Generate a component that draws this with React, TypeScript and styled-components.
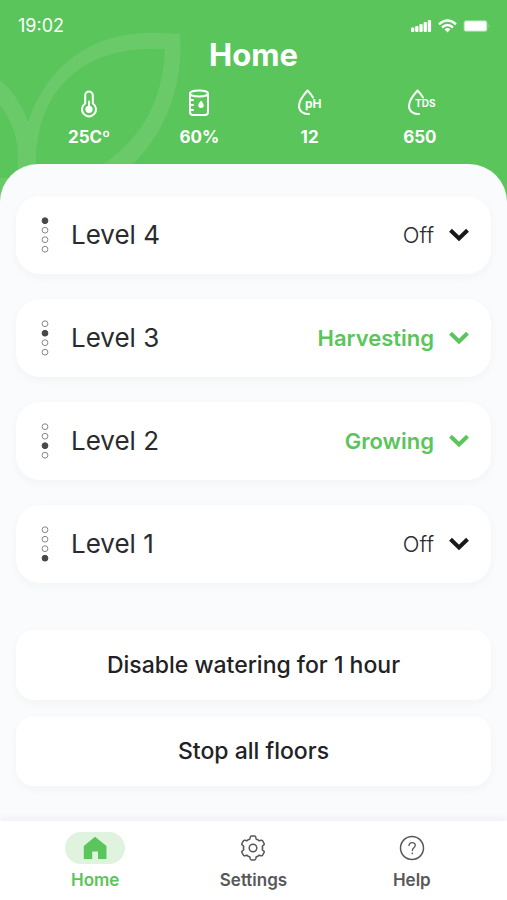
import React, { useState } from "react";
import styled, { createGlobalStyle } from "styled-components";

const green = "#5ac55a";
const ink = "#2b2b2e";
const grey = "#58585a";

const GlobalStyle = createGlobalStyle`
  * { box-sizing: border-box; }
  body { margin: 0; background: #fafbfd; font-family: Inter, "Liberation Sans", sans-serif; color: ${ink}; }
  button { font-family: inherit; color: inherit; border: 0; cursor: pointer; }
`;

const Page = styled.div`
  position: relative;
  display: flex;
  flex-direction: column;
  min-height: 100vh;
  background: ${green};
`;

const Leaf = styled.svg`
  position: absolute;
  top: 0;
  left: 0;
`;

const Header = styled.header`
  position: relative;
  color: #fff;
  padding-bottom: 16px;
`;

const StatusBar = styled.div`
  display: flex;
  align-items: center;
  justify-content: space-between;
  padding: 16px 16px 0 18px;
  height: 36px;
  font-size: 18px;
  line-height: 20px;
`;

const StatusIcons = styled.div`
  display: flex;
  align-items: center;
  gap: 6px;
`;

const Title = styled.h1`
  margin: 0;
  text-align: center;
  font-size: 31px;
  line-height: 38px;
  font-weight: 700;
`;

const Metrics = styled.ul`
  display: grid;
  grid-template-columns: repeat(4, 1fr);
  list-style: none;
  margin: 0;
  padding: 14px 32px 0 34px;
`;

const Metric = styled.li`
  display: flex;
  flex-direction: column;
  align-items: center;
  gap: 8px;
  font-size: 17px;
  line-height: 22px;
  font-weight: 700;
`;

const MetricIcon = styled.svg`
  width: 32px;
  height: 30px;
  fill: none;
  stroke: #fff;
  stroke-width: 2;
  stroke-linecap: round;
  stroke-linejoin: round;

  text {
    fill: #fff;
    stroke: none;
    font-weight: 700;
  }
`;

const Main = styled.main`
  position: relative;
  flex: 1;
  display: flex;
  flex-direction: column;
  gap: 47px;
  padding: 32px 16px;
  background: #fafbfd;
  border-radius: 38px 38px 0 0;
`;

const Stack = styled.div<{ $gap: number }>`
  display: flex;
  flex-direction: column;
  gap: ${(p) => p.$gap}px;
`;

const LevelCard = styled.button`
  display: flex;
  align-items: center;
  height: 78px;
  padding: 0 22px 0 24px;
  background: #fff;
  border-radius: 24px;
  box-shadow: 0 3px 8px rgba(30, 40, 50, 0.04);
`;

const LevelDots = styled.svg`
  width: 10px;
  height: 38px;
  margin-right: 21px;
`;

const LevelName = styled.span`
  flex: 1;
  text-align: left;
  font-size: 26px;
  line-height: 32px;
`;

const LevelStatus = styled.span<{ $active: boolean }>`
  display: flex;
  align-items: center;
  gap: 15px;
  font-size: 22px;
  line-height: 28px;
  font-weight: ${(p) => (p.$active ? 600 : 300)};
  color: ${(p) => (p.$active ? green : ink)};
`;

const Chevron = styled.svg<{ $active: boolean }>`
  width: 20px;
  height: 14px;
  fill: none;
  stroke: ${(p) => (p.$active ? green : "#18181a")};
  stroke-width: 4;
`;

const ActionButton = styled.button`
  height: 70px;
  background: #fff;
  border-radius: 18px;
  box-shadow: 0 3px 8px rgba(30, 40, 50, 0.04);
  font-size: 23px;
  line-height: 28px;
  font-weight: 500;
  color: #222224;
`;

const Nav = styled.nav`
  position: relative;
  display: grid;
  grid-template-columns: repeat(3, 1fr);
  padding: 11px 16px 9px;
  background: #fff;
  box-shadow: 0 -3px 8px rgba(30, 40, 50, 0.05);
`;

const NavLink = styled.a<{ $active: boolean }>`
  display: flex;
  flex-direction: column;
  align-items: center;
  gap: 5px;
  text-decoration: none;
  font-size: 17px;
  line-height: 22px;
  font-weight: 600;
  color: ${(p) => (p.$active ? green : grey)};
`;

const NavPill = styled.span<{ $active: boolean }>`
  display: flex;
  align-items: center;
  justify-content: center;
  width: 60px;
  height: 32px;
  border-radius: 16px;
  background: ${(p) => (p.$active ? "#dff3df" : "transparent")};
`;

const Thermometer = () => (
  <MetricIcon viewBox="0 0 32 30" aria-hidden="true">
    <path d="M12.2 15.500V7.300a3.800 3.800 0 0 1 7.600 0v8.200a7 7 0 1 1-7.600 0Z" />
    <path d="M16 13.500v7" />
    <circle cx="16" cy="21.300" r="3.600" fill="#fff" stroke="none" />
  </MetricIcon>
);

const Tank = () => (
  <MetricIcon viewBox="0 0 32 30" aria-hidden="true">
    <ellipse cx="16" cy="5.500" rx="9" ry="3" />
    <path d="M7 5.500V24a3 3 0 0 0 3 3h12a3 3 0 0 0 3-3V5.500M7 12h3M7 17h3M7 22h3" />
    <path d="M18 12.500c1.500 2 2.700 3.300 2.700 4.800a2.700 2.700 0 0 1-5.400 0c0-1.500 1.200-2.800 2.700-4.800Z" fill="#fff" stroke="none" />
  </MetricIcon>
);

const Drop = ({ label }: { label: string }) => (
  <MetricIcon viewBox="0 0 32 30" aria-hidden="true">
    <path d="M19 9.500C17.500 7 15.500 4.500 13.500 2.500C9 7.500 5 13 5 18c0 5 4.200 8.600 10 8" />
    {label === "pH" ? (
      <text x="11" y="20" fontSize="12">pH</text>
    ) : (
      <text x="11" y="19" fontSize="10">TDS</text>
    )}
  </MetricIcon>
);

const HomeIcon = () => (
  <svg width="24" height="24" viewBox="0 0 24 24" fill={green} aria-hidden="true">
    <path d="M12 .8 23.500 10V23H15v-7.500H9.200V23H.8V10Z" />
  </svg>
);

const gearOutline = Array.from({ length: 6 }, (_, i) => {
  const at = (deg: number, r: number) => {
    const a = ((i * 60 + deg - 90) * Math.PI) / 180;
    return `${(13 + r * Math.cos(a)).toFixed(2)} ${(13 + r * Math.sin(a)).toFixed(2)}`;
  };
  return `${i ? "L" : "M"}${at(-15, 11)}Q${at(-12, 12)} ${at(-7, 12)}L${at(7, 12)}Q${at(12, 12)} ${at(15, 11)}L${at(18, 9.8)}Q${at(22, 9)} ${at(27, 9.6)}Q${at(30, 9.8)} ${at(33, 9.6)}Q${at(38, 9)} ${at(42, 9.8)}`;
}).join("");

const GearIcon = () => (
  <svg width="26" height="26" viewBox="0 0 26 26" fill="none" stroke={grey} strokeWidth="1.500" strokeLinejoin="round" aria-hidden="true">
    <path d={`${gearOutline}Z`} />
    <circle cx="13" cy="13" r="3.800" />
  </svg>
);

const HelpIcon = () => (
  <svg width="26" height="26" viewBox="0 0 26 26" fill="none" stroke={grey} strokeWidth="1.500" strokeLinecap="round" aria-hidden="true">
    <circle cx="13" cy="13" r="11.500" />
    <path d="M10 10.500c.2-4 6.300-3.800 6.300-.2 0 2.400-3 2.400-3 5.200" strokeWidth="1.300" />
    <circle cx="13.300" cy="18.300" r=".9" fill={grey} stroke="none" />
  </svg>
);

const metrics = [
  { icon: <Thermometer />, value: "25Cº" },
  { icon: <Tank />, value: "60%" },
  { icon: <Drop label="pH" />, value: "12" },
  { icon: <Drop label="TDS" />, value: "650" },
];

const levels = [
  { level: 4, status: "Off" },
  { level: 3, status: "Harvesting" },
  { level: 2, status: "Growing" },
  { level: 1, status: "Off" },
];

const tabs = [
  { name: "Home", icon: <HomeIcon /> },
  { name: "Settings", icon: <GearIcon /> },
  { name: "Help", icon: <HelpIcon /> },
];

export default function App() {
  const [tab, setTab] = useState("Home");
  return (
    <Page>
      <GlobalStyle />
      <Leaf width="190" height="210" viewBox="0 0 190 210" fill="#fff" fillOpacity=".1" aria-hidden="true">
        <path d="M0 80C13 91 22 105 28 122C48 64 92 33 150 33Q166 33 180 34C184 84 165 133 133 164H104C144 136 163 98 165 49C80 44 36 92 36 164V207H18V164C19 140 13 122 0 105Z" />
        <path d="M0 178H10V207H0Z" />
      </Leaf>
      <Header>
        <StatusBar>
          <span>19:02</span>
          <StatusIcons>
            <svg width="21" height="14" viewBox="0 0 21 14" fill="#fff" aria-hidden="true">
              <rect x="0" y="8.500" width="3.300" height="4.500" rx="1" />
              <rect x="4.200" y="7" width="3.300" height="6" rx="1" />
              <rect x="8.400" y="5" width="3.300" height="8" rx="1" />
              <rect x="12.600" y="3" width="3.300" height="10" rx="1" />
              <rect x="16.800" y="1" width="3.300" height="12" rx="1" />
            </svg>
            <svg width="19" height="14" viewBox="0 0 19 14" fill="none" stroke="#fff" strokeWidth="2.400" aria-hidden="true">
              <path d="M1 5.300q8.500-7.600 17 0M4 8.500q5.500-4.800 11 0" />
              <path d="M6.500 10.300q3-2.400 6 0l-3 3.200Z" fill="#fff" stroke="none" />
            </svg>
            <svg width="28" height="14" viewBox="0 0 28 14" fill="#fff" aria-hidden="true">
              <rect x=".5" y="1" width="24" height="12" rx="3" opacity=".35" />
              <path d="M25.500 5q2 2 0 4Z" opacity=".35" />
              <rect x="1.500" y="2.200" width="22" height="9.600" rx="1.500" />
            </svg>
          </StatusIcons>
        </StatusBar>
        <Title>Home</Title>
        <Metrics>
          {metrics.map((m) => (
            <Metric key={m.value}>
              {m.icon}
              {m.value}
            </Metric>
          ))}
        </Metrics>
      </Header>
      <Main>
        <Stack $gap={25}>
          {levels.map(({ level, status }) => {
            const active = status !== "Off";
            return (
              <LevelCard key={level} type="button">
                <LevelDots viewBox="0 0 10 38" aria-hidden="true">
                  {[4, 3, 2, 1].map((n, i) => (
                    <circle
                      key={n}
                      cx="5"
                      cy={4.7 + i * 9.5}
                      r="2.900"
                      fill={n === level ? "#48484a" : "none"}
                      stroke={n === level ? "#48484a" : "#88888a"}
                      strokeWidth="1"
                    />
                  ))}
                </LevelDots>
                <LevelName>Level {level}</LevelName>
                <LevelStatus $active={active}>
                  {status}
                  <Chevron $active={active} viewBox="0 0 20 14" aria-hidden="true">
                    <path d="M1.500 2.300 10 10.500l8.500-8.200" />
                  </Chevron>
                </LevelStatus>
              </LevelCard>
            );
          })}
        </Stack>
        <Stack $gap={16}>
          <ActionButton type="button">Disable watering for 1 hour</ActionButton>
          <ActionButton type="button">Stop all floors</ActionButton>
        </Stack>
      </Main>
      <Nav>
        {tabs.map(({ name, icon }) => (
          <NavLink
            key={name}
            href={`#${name.toLowerCase()}`}
            $active={tab === name}
            aria-current={tab === name ? "page" : undefined}
            onClick={() => setTab(name)}
          >
            <NavPill $active={tab === name}>{icon}</NavPill>
            {name}
          </NavLink>
        ))}
      </Nav>
    </Page>
  );
}
